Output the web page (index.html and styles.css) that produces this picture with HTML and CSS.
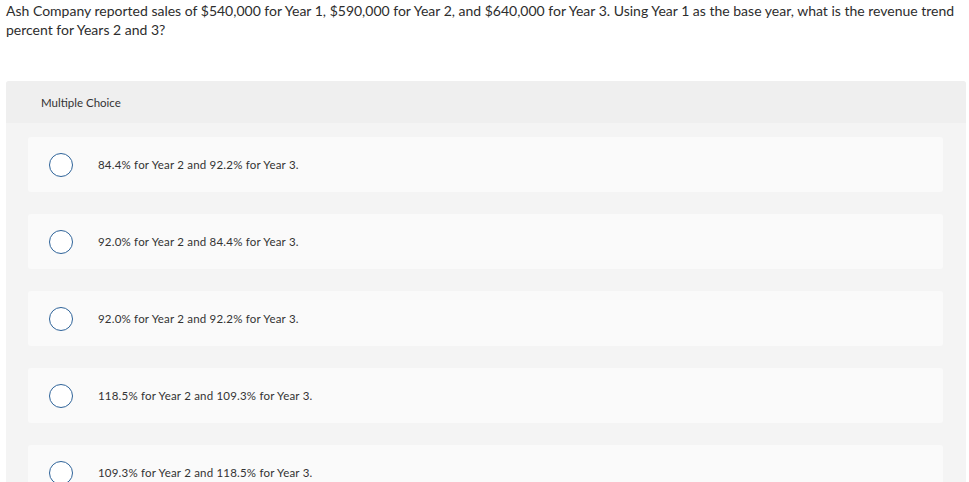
FILE: index.html
```html
<!DOCTYPE html>
<html lang="en">
<head>
    <meta charset="UTF-8">
    <title>Multiple Choice</title>
    <link rel="stylesheet" href="styles.css">
</head>
<body>
<div class="question">
    <p class="prompt">Ash Company reported sales of $540,000 for Year 1, $590,000 for Year 2, and $640,000 for Year 3. Using Year 1 as the base year, what is the revenue trend percent for Years 2 and 3?</p>

    <div class="choices">
        <div class="choices-header">Multiple Choice</div>
        <div class="choices-list">
            <label class="choice">
                <span class="radio"></span>
                <span class="choice-text">84.4% for Year 2 and 92.2% for Year 3.</span>
            </label>
            <label class="choice">
                <span class="radio"></span>
                <span class="choice-text">92.0% for Year 2 and 84.4% for Year 3.</span>
            </label>
            <label class="choice">
                <span class="radio"></span>
                <span class="choice-text">92.0% for Year 2 and 92.2% for Year 3.</span>
            </label>
            <label class="choice">
                <span class="radio"></span>
                <span class="choice-text">118.5% for Year 2 and 109.3% for Year 3.</span>
            </label>
            <label class="choice">
                <span class="radio"></span>
                <span class="choice-text">109.3% for Year 2 and 118.5% for Year 3.</span>
            </label>
        </div>
    </div>
</div>
</body>
</html>
```

FILE: styles.css
```css
* {
    box-sizing: border-box;
    margin: 0;
    padding: 0;
}

body {
    background: #ffffff;
    font-family: Lato, "Open Sans", sans-serif;
    color: #333333;
    padding: 1px 3px 0 6px;
}

.prompt {
    font-size: 14px;
    line-height: 19px;
    color: #2d2d2d;
    margin-bottom: 42px;
}

.choices {
    background: #f4f4f4;
    border-radius: 3px 3px 0 0;
}

.choices-header {
    background: #efefef;
    height: 42px;
    display: flex;
    align-items: center;
    padding-left: 35px;
    font-size: 11.5px;
    color: #333333;
    border-radius: 3px 3px 0 0;
}

.choices-list {
    display: flex;
    flex-direction: column;
    gap: 22px;
    padding: 14px 23px 22px 22px;
}

.choice {
    display: flex;
    align-items: center;
    height: 55px;
    background: #fafafa;
    border-radius: 3px;
    padding-left: 21px;
    cursor: pointer;
}

.radio {
    width: 24px;
    height: 24px;
    border: 1.5px solid #2e6399;
    border-radius: 50%;
    background: #ffffff;
    flex-shrink: 0;
    margin-right: 25px;
}

.choice-text {
    font-size: 11.5px;
    letter-spacing: 0.2px;
    color: #333333;
}
```
